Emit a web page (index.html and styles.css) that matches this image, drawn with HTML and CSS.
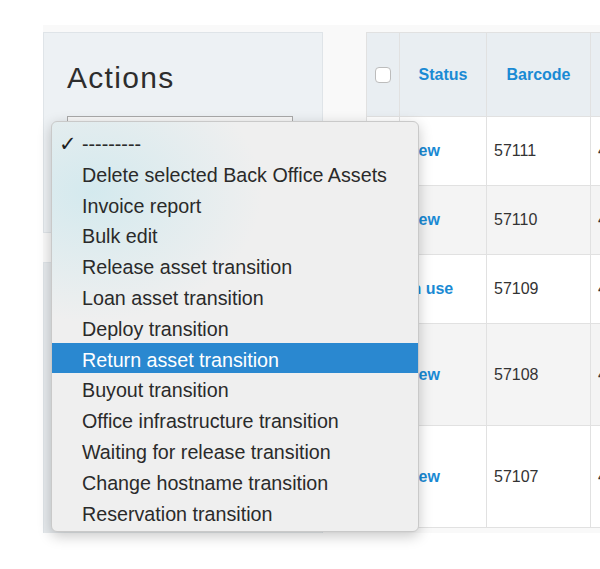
FILE: index.html
```html
<!DOCTYPE html>
<html lang="en">
<head>
    <meta charset="UTF-8">
    <meta name="viewport" content="width=device-width, initial-scale=1.0">
    <title>Back Office Assets</title>
    <link rel="stylesheet" href="styles.css">
</head>
<body>
    <div class="page">
        <div class="sidebar">
            <div class="panel actions">
                <h2>Actions</h2>
                <div class="select-box"></div>
            </div>
            <div class="panel filters"></div>
        </div>

        <table class="assets">
            <colgroup>
                <col class="col-check">
                <col class="col-status">
                <col class="col-barcode">
                <col class="col-sn">
            </colgroup>
            <tr class="head">
                <th><span class="checkbox"></span></th>
                <th><a href="#">Status</a></th>
                <th><a href="#">Barcode</a></th>
                <th></th>
            </tr>
            <tr class="row-a">
                <td><span class="checkbox"></span></td>
                <td><a href="#">New</a></td>
                <td>57111</td>
                <td>4</td>
            </tr>
            <tr class="row-b">
                <td><span class="checkbox"></span></td>
                <td><a href="#">New</a></td>
                <td>57110</td>
                <td>4</td>
            </tr>
            <tr class="row-a">
                <td><span class="checkbox"></span></td>
                <td><a href="#">In use</a></td>
                <td>57109</td>
                <td>4</td>
            </tr>
            <tr class="row-b tall">
                <td><span class="checkbox"></span></td>
                <td><a href="#">New</a></td>
                <td>57108</td>
                <td>4</td>
            </tr>
            <tr class="row-a tall">
                <td><span class="checkbox"></span></td>
                <td><a href="#">New</a></td>
                <td>57107</td>
                <td>4</td>
            </tr>
        </table>
    </div>

    <!-- open action select popup -->
    <ul class="popup">
        <li class="checked"><span class="mark">&#10003;</span>---------</li>
        <li><span class="mark"></span>Delete selected Back Office Assets</li>
        <li><span class="mark"></span>Invoice report</li>
        <li><span class="mark"></span>Bulk edit</li>
        <li><span class="mark"></span>Release asset transition</li>
        <li><span class="mark"></span>Loan asset transition</li>
        <li><span class="mark"></span>Deploy transition</li>
        <li class="active"><span class="mark"></span>Return asset transition</li>
        <li><span class="mark"></span>Buyout transition</li>
        <li><span class="mark"></span>Office infrastructure transition</li>
        <li><span class="mark"></span>Waiting for release transition</li>
        <li><span class="mark"></span>Change hostname transition</li>
        <li><span class="mark"></span>Reservation transition</li>
    </ul>
</body>
</html>
```

FILE: styles.css
```css
body {
    margin: 0;
    background-color: white;
    font-family: "Liberation Sans", Arial, sans-serif;
    color: #333;
    overflow: hidden;
}

.page {
    display: flex;
    align-items: flex-start;
    gap: 43px;
    margin: 25px 0 0 43px;
    padding-top: 7px;
    height: 501px;
    background-color: #f9f9f9;
    overflow: hidden;
}

.sidebar {
    flex: none;
    width: 280px;
}

.panel {
    box-sizing: border-box;
    background-color: #edf1f4;
    border: 1px solid #dfe4e8;
}

.actions {
    height: 201px;
    padding: 27px 0 0 23px;
}

.actions h2 {
    margin: 0;
    font-size: 30px;
    font-weight: normal;
    line-height: 36px;
    letter-spacing: 1.3px;
    color: #2d2d2d;
}

.select-box {
    box-sizing: border-box;
    width: 226px;
    height: 30px;
    margin-top: 20px;
    background-color: #f7f7f7;
    border: 1px solid #a9a9a9;
}

.filters {
    height: 272px;
    margin-top: 29px;
    background-color: #e6eaed;
}

.assets {
    flex: none;
    width: 450px;
    table-layout: fixed;
    border-collapse: collapse;
    background-color: white;
    font-size: 16px;
}

.col-check { width: 33px; }
.col-status { width: 87px; }
.col-barcode { width: 104px; }
.col-sn { width: 226px; }

.assets th,
.assets td {
    border: 1px solid #e1e1e1;
    padding: 0 7px;
    white-space: nowrap;
    overflow: hidden;
}

.assets th {
    height: 83px;
    background-color: #e9eef2;
    text-align: center;
}

.assets td {
    height: 68px;
    text-align: left;
}

.assets tr.tall td {
    height: 101px;
}

.assets td:first-child,
.assets th:first-child {
    padding: 0;
    text-align: center;
}

.assets a {
    color: #1a8ad4;
    font-weight: bold;
    text-decoration: none;
}

.row-b td {
    background-color: #f4f4f4;
}

.checkbox {
    display: inline-block;
    box-sizing: border-box;
    width: 16px;
    height: 16px;
    vertical-align: middle;
    background-color: white;
    border: 1px solid #bcbcbc;
    border-radius: 4px;
}

.popup {
    position: absolute;
    left: 51px;
    top: 121px;
    box-sizing: border-box;
    width: 368px;
    height: 411px;
    margin: 0;
    padding: 5px 0;
    list-style: none;
    background-color: #efefef;
    background-image: radial-gradient(ellipse 170px 130px at 40px 70px, rgba(205, 232, 238, 0.8), rgba(239, 239, 239, 0));
    border: 1px solid #c9c9c9;
    border-radius: 6px;
    box-shadow: 0 4px 14px rgba(0, 0, 0, 0.22);
    font-size: 19.7px;
    color: #2a2a2a;
}

.popup li {
    height: 28.8px;
    padding: 2px 0 0 7px;
    line-height: 30.8px;
    white-space: nowrap;
}

.popup .mark {
    display: inline-block;
    width: 23px;
    font-family: "DejaVu Sans", sans-serif;
    font-size: 21px;
    font-weight: bold;
    color: #1e1e1e;
}

.popup li.active {
    background-color: #2a88d0;
    color: white;
}
```
